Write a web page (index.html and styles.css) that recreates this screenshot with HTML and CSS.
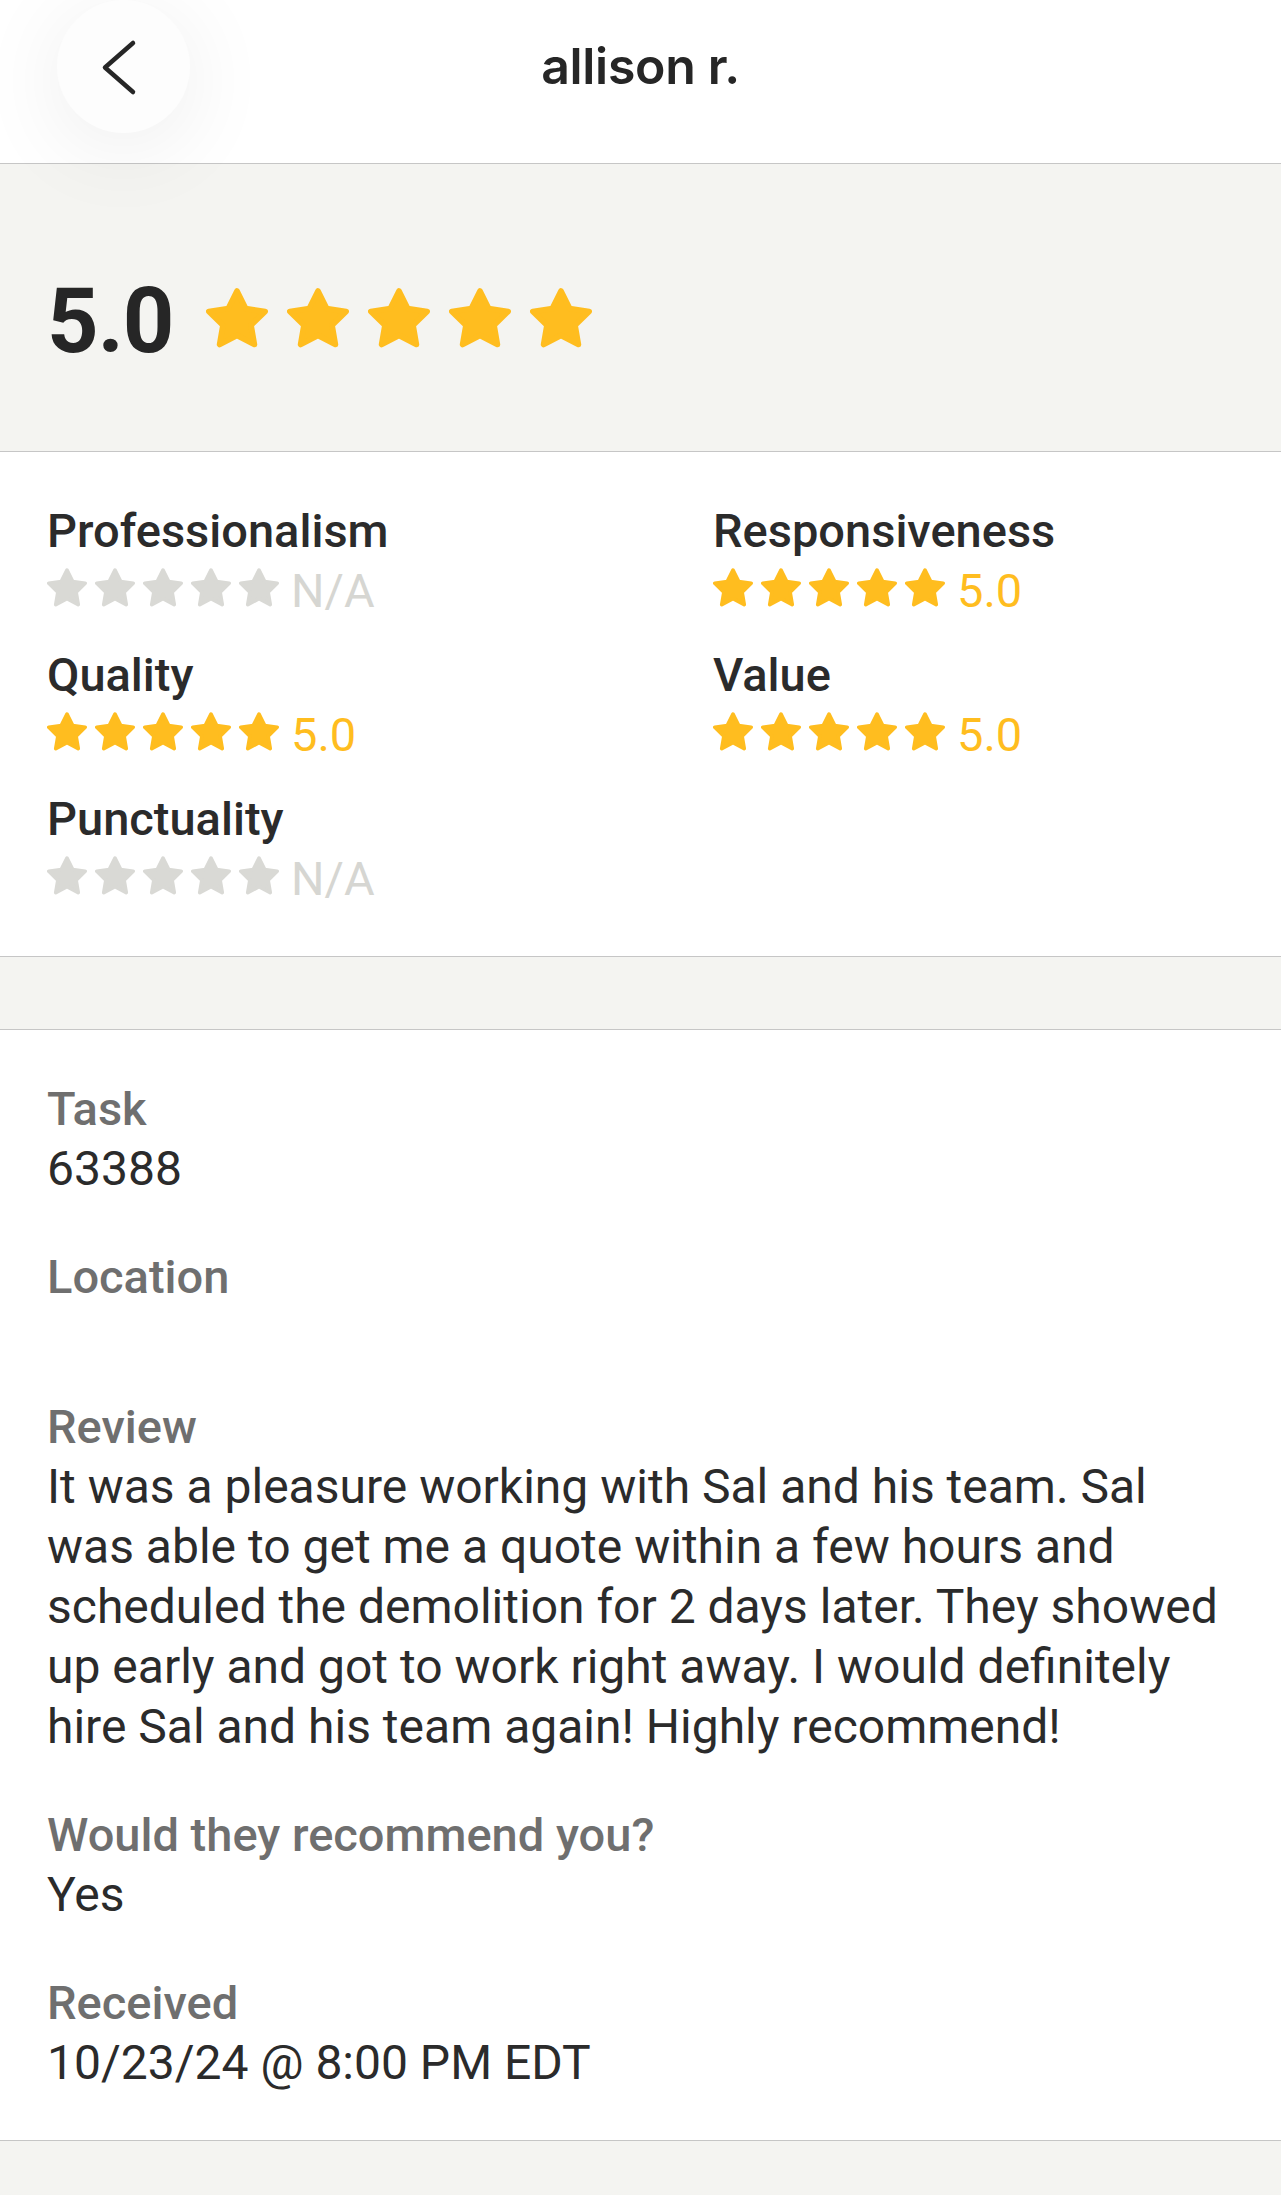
FILE: index.html
```html
<!DOCTYPE html>
<html lang="en">
<head>
<meta charset="utf-8">
<title>allison r.</title>
<link rel="stylesheet" href="styles.css">
</head>
<body>
<svg width="0" height="0" class="defs" aria-hidden="true">
  <defs>
    <symbol id="star" viewBox="1 1 22 21.2">
      <polygon points="12,2 15.09,8.26 22,9.27 17,14.14 18.18,21.02 12,17.77 5.82,21.02 7,14.14 2,9.27 8.91,8.26" stroke-width="2" stroke-linejoin="round"/>
    </symbol>
  </defs>
</svg>

<header class="topbar">
  <button class="back" aria-label="Back">
    <svg viewBox="0 0 133 133" width="133" height="133"><path d="M76 43 L48 67.5 L76 92" fill="none" stroke="#262626" stroke-width="4.5" stroke-linecap="round" stroke-linejoin="round"/></svg>
  </button>
  <h1 class="title">allison r.</h1>
  <span class="spacer-col"></span>
</header>

<section class="overall">
  <span class="score">5.0</span>
  <div class="stars big gold">
    <svg><use href="#star"/></svg><svg><use href="#star"/></svg><svg><use href="#star"/></svg><svg><use href="#star"/></svg><svg><use href="#star"/></svg>
  </div>
</section>

<section class="ratings">
  <div class="rating">
    <div class="rating-label">Professionalism</div>
    <div class="rating-row empty">
      <div class="stars small"><svg><use href="#star"/></svg><svg><use href="#star"/></svg><svg><use href="#star"/></svg><svg><use href="#star"/></svg><svg><use href="#star"/></svg></div>
      <span class="rating-value">N/A</span>
    </div>
  </div>
  <div class="rating">
    <div class="rating-label">Responsiveness</div>
    <div class="rating-row gold">
      <div class="stars small"><svg><use href="#star"/></svg><svg><use href="#star"/></svg><svg><use href="#star"/></svg><svg><use href="#star"/></svg><svg><use href="#star"/></svg></div>
      <span class="rating-value">5.0</span>
    </div>
  </div>
  <div class="rating">
    <div class="rating-label">Quality</div>
    <div class="rating-row gold">
      <div class="stars small"><svg><use href="#star"/></svg><svg><use href="#star"/></svg><svg><use href="#star"/></svg><svg><use href="#star"/></svg><svg><use href="#star"/></svg></div>
      <span class="rating-value">5.0</span>
    </div>
  </div>
  <div class="rating">
    <div class="rating-label">Value</div>
    <div class="rating-row gold">
      <div class="stars small"><svg><use href="#star"/></svg><svg><use href="#star"/></svg><svg><use href="#star"/></svg><svg><use href="#star"/></svg><svg><use href="#star"/></svg></div>
      <span class="rating-value">5.0</span>
    </div>
  </div>
  <div class="rating">
    <div class="rating-label">Punctuality</div>
    <div class="rating-row empty">
      <div class="stars small"><svg><use href="#star"/></svg><svg><use href="#star"/></svg><svg><use href="#star"/></svg><svg><use href="#star"/></svg><svg><use href="#star"/></svg></div>
      <span class="rating-value">N/A</span>
    </div>
  </div>
</section>

<div class="gap-band"></div>

<section class="details">
  <div class="field">
    <div class="field-label">Task</div>
    <div class="field-value">63388</div>
  </div>
  <div class="field">
    <div class="field-label">Location</div>
    <div class="field-value blank"></div>
  </div>
  <div class="field">
    <div class="field-label">Review</div>
    <div class="field-value">It was a pleasure working with Sal and his team. Sal was able to get me a quote within a few hours and scheduled the demolition for 2 days later. They showed up early and got to work right away. I would definitely hire Sal and his team again! Highly recommend!</div>
  </div>
  <div class="field">
    <div class="field-label">Would they recommend you?</div>
    <div class="field-value">Yes</div>
  </div>
  <div class="field">
    <div class="field-label">Received</div>
    <div class="field-value">10/23/24 @ 8:00 PM EDT</div>
  </div>
</section>
</body>
</html>
```

FILE: styles.css
```css
* { box-sizing: border-box; }

html, body {
  margin: 0;
  padding: 0;
}

body {
  background: #f4f4f1;
  color: #2b2b2b;
  font-family: Roboto, "Liberation Sans", Arial, sans-serif;
  min-height: 2195px;
}

.defs {
  position: absolute;
  width: 0;
  height: 0;
  overflow: hidden;
}

/* Header */
.topbar {
  position: relative;
  z-index: 2;
  display: grid;
  grid-template-columns: 1fr auto 1fr;
  align-items: center;
  height: 164px;
  padding: 0 0 30px 0;
  background: #ffffff;
  border-bottom: 1px solid #c6c6c6;
}

.back {
  width: 133px;
  height: 133px;
  margin-left: 57px;
  padding: 0;
  border: none;
  border-radius: 50%;
  background: #fdfdfd;
  box-shadow: 0 14px 90px rgba(0, 0, 0, 0.075);
  justify-self: start;
}

.back svg { display: block; }

.title {
  margin: 0;
  font-family: Inter, "Liberation Sans", sans-serif;
  font-weight: 600;
  font-size: 50px;
  line-height: 133px;
  color: #262626;
  letter-spacing: -0.3px;
}

/* Stars */
.stars {
  display: flex;
}

.stars svg {
  display: block;
  flex: none;
}

.gold .stars svg,
.stars.gold svg {
  fill: #ffbd1f;
  stroke: #ffbd1f;
}

.empty .stars svg {
  fill: #d9d9d5;
  stroke: #d9d9d5;
}

.stars.big {
  gap: 19px;
  margin-left: 33px;
  margin-bottom: 8px;
}

.stars.big svg {
  width: 62px;
  height: 60px;
}

.stars.small {
  gap: 8px;
}

.stars.small svg {
  width: 40px;
  height: 39px;
}

/* Overall */
.overall {
  display: flex;
  align-items: center;
  padding: 113px 47px 84px;
  border-bottom: 1px solid #c6c6c6;
}

.score {
  font-weight: 700;
  font-size: 90px;
  line-height: 90px;
  letter-spacing: -1px;
  color: #262626;
}

/* Ratings */
.ratings {
  display: grid;
  grid-template-columns: 666px 1fr;
  row-gap: 33px;
  padding: 51px 47px 54px;
  background: #ffffff;
  border-bottom: 1px solid #c6c6c6;
}

.rating-label {
  font-size: 47px;
  line-height: 56px;
  font-weight: 500;
  color: #2b2b2b;
  margin-bottom: 9px;
}

.rating-row {
  display: flex;
  align-items: baseline;
  height: 46px;
}

.rating-value {
  font-size: 47px;
  line-height: 46px;
  margin-left: 12px;
}

.rating-row.gold .rating-value { color: #ffbd1f; }
.rating-row.empty .rating-value { color: #d6d6d2; }

/* Gap band */
.gap-band {
  height: 73px;
  border-bottom: 1px solid #c6c6c6;
}

/* Details */
.details {
  display: flex;
  flex-direction: column;
  gap: 48px;
  padding: 49px 47px 47px;
  background: #ffffff;
  border-bottom: 1px solid #c6c6c6;
}

.field-label {
  font-size: 47px;
  line-height: 60px;
  font-weight: 500;
  color: #6f6f6f;
}

.field-value {
  font-size: 48px;
  line-height: 60px;
  color: #2b2b2b;
}

.field-value.blank {
  height: 42px;
}
```
